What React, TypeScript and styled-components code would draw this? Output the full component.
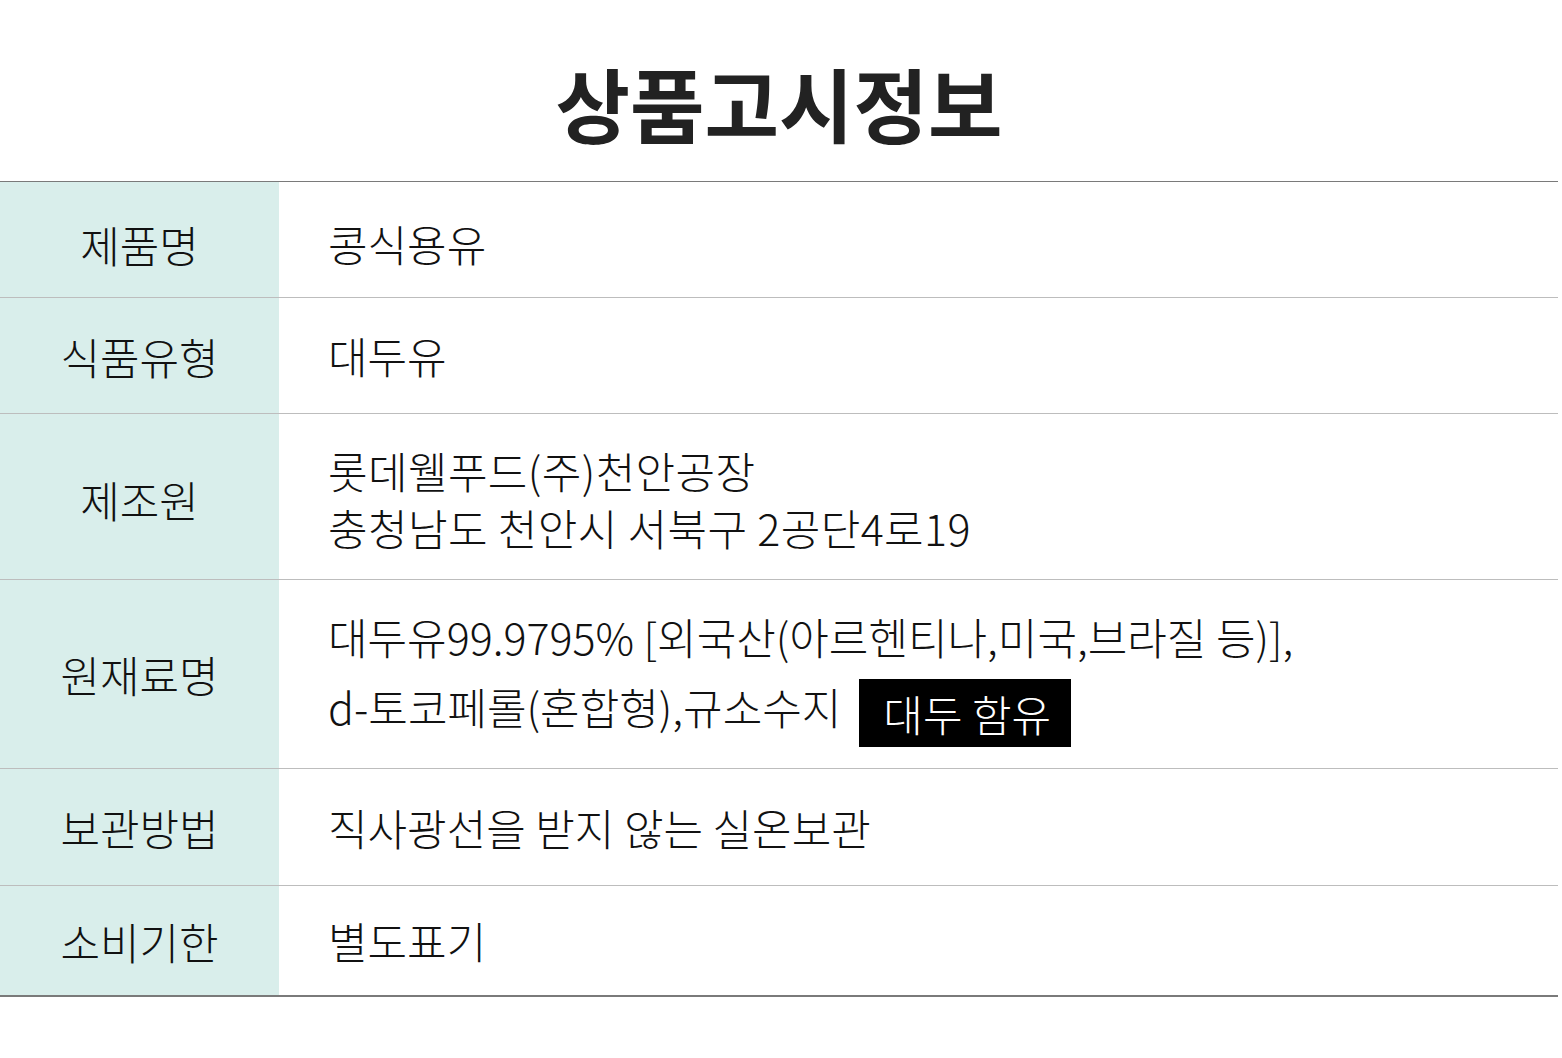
import styled, { createGlobalStyle } from "styled-components";

const GlobalStyle = createGlobalStyle`
  * { box-sizing: border-box; }
  body {
    margin: 0;
    background: #fff;
    font-family: "Noto Sans CJK KR", "Noto Sans", sans-serif;
    color: #111;
  }
`;

const Page = styled.div`
  width: 1558px;
  padding-top: 50px;
`;

const Title = styled.h1`
  margin: 0;
  height: 131px;
  text-align: center;
  font-size: 81px;
  font-weight: 700;
  line-height: 104px;
  color: #222;
`;

const Table = styled.div`
  border-top: 1px solid #7a7a7a;
  border-bottom: 2px solid #7a7a7a;
`;

const Row = styled.div<{ $h: number; $last?: boolean; $shift?: number }>`
  display: grid;
  grid-template-columns: 279px 1fr;
  height: ${(p) => p.$h}px;
  border-bottom: ${(p) => (p.$last ? "none" : "1px solid #bdbdbd")};

  & > div {
    padding-top: ${(p) => p.$shift ?? 0}px;
  }
`;

const Label = styled.div`
  background: #d9eeeb;
  display: flex;
  align-items: center;
  justify-content: center;
  font-size: 43px;
  font-weight: 300;
  color: #111;
`;

const Value = styled.div<{ $lh?: number; $ls?: number }>`
  display: flex;
  flex-direction: column;
  justify-content: center;
  padding-left: 49px;
  font-size: 43px;
  font-weight: 300;
  line-height: ${(p) => p.$lh ?? 57}px;
  letter-spacing: ${(p) => p.$ls ?? 0}px;
  color: #111;
`;

const Badge = styled.span`
  display: inline-block;
  background: #000;
  color: #fff;
  margin-left: 18px;
  padding: 0 20px 0 24px;
  line-height: 68px;
  vertical-align: middle;
`;

export default function App() {
  return (
    <Page>
      <GlobalStyle />
      <Title>상품고시정보</Title>
      <Table>
        <Row $h={116} $shift={8}>
          <Label>제품명</Label>
          <Value>콩식용유</Value>
        </Row>
        <Row $h={116}>
          <Label>식품유형</Label>
          <Value>대두유</Value>
        </Row>
        <Row $h={166} $shift={4}>
          <Label>제조원</Label>
          <Value $ls={0.4}>
            <div>롯데웰푸드(주)천안공장</div>
            <div>충청남도 천안시 서북구 2공단4로19</div>
          </Value>
        </Row>
        <Row $h={189}>
          <Label>원재료명</Label>
          <Value $lh={70}>
            <div>대두유99.9795% [외국산(아르헨티나,미국,브라질 등)],</div>
            <div>
              d-토코페롤(혼합형),규소수지
              <Badge>대두 함유</Badge>
            </div>
          </Value>
        </Row>
        <Row $h={117}>
          <Label>보관방법</Label>
          <Value>직사광선을 받지 않는 실온보관</Value>
        </Row>
        <Row $h={109} $last>
          <Label>소비기한</Label>
          <Value>별도표기</Value>
        </Row>
      </Table>
    </Page>
  );
}
